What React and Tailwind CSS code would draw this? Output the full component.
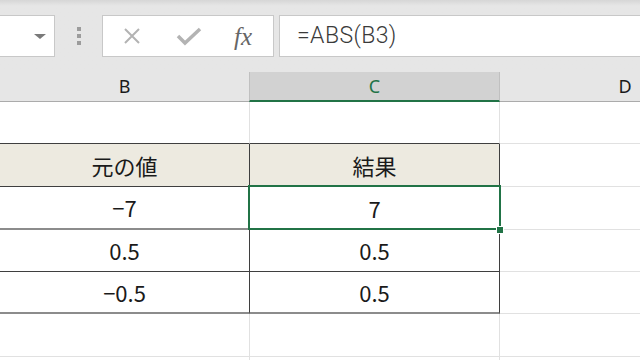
const light = 'border-[#e1e1e1]';
const dark = 'border-[#3f3f3f]';

function Cell({ className = '', children }) {
  return (
    <div className={`shrink-0 flex items-center justify-center border-r border-b ${className}`}>
      {children}
    </div>
  );
}

export default function App() {
  return (
    <div
      className="relative w-[640px] h-[360px] overflow-hidden bg-white text-[#1a1a1a]"
      style={{ fontFamily: '"Noto Sans", "Noto Sans CJK JP", sans-serif' }}
    >
      {/* toolbar */}
      <div className="h-[72px] bg-gradient-to-b from-[#d6d6d6] via-[#e6e6e6] via-[8%] to-[#e6e6e6] pt-[15px] flex items-start">
        <div className="w-[55px] h-[42px] bg-white border border-l-0 border-[#c8c8c8] flex items-center justify-end pr-[8px]">
          <div className="w-0 h-0 border-l-[6px] border-r-[6px] border-t-[5px] border-l-transparent border-r-transparent border-t-[#7a7a7a]" />
        </div>
        <div className="w-[47px] h-[42px] flex flex-col items-center justify-center gap-[3px]">
          <div className="w-[4px] h-[4px] bg-[#9c9c9c]" />
          <div className="w-[4px] h-[4px] bg-[#9c9c9c]" />
          <div className="w-[4px] h-[4px] bg-[#9c9c9c]" />
        </div>
        <div className="w-[172px] h-[42px] bg-white border border-[#c8c8c8] flex items-center">
          <svg width="20" height="20" viewBox="0 0 20 20" className="ml-[19px]">
            <path d="M3 3 L17 17 M17 3 L3 17" stroke="#b3b3b3" strokeWidth="2" fill="none" />
          </svg>
          <svg width="26" height="20" viewBox="0 0 26 20" className="ml-[34px]">
            <path d="M2 10 L9 17 L24 3" stroke="#b3b3b3" strokeWidth="3.5" fill="none" />
          </svg>
          <span
            className="ml-[32px] text-[25px] italic text-[#666] leading-none"
            style={{ fontFamily: '"Liberation Serif", "DejaVu Serif", serif' }}
          >
            fx
          </span>
        </div>
        <div className="ml-[5px] flex-1 h-[42px] bg-white border border-r-0 border-[#c8c8c8] flex items-center pl-[17px]">
          <span
            className="text-[23px] font-light text-[#3a3a3a] tracking-[0.4px]"
            style={{ fontFamily: 'Roboto, "Noto Sans", sans-serif' }}
          >
            =ABS(B3)
          </span>
        </div>
      </div>

      {/* column headers */}
      <div className="flex h-[30px] bg-[#e6e6e6] text-[18px]">
        <div className="w-[249px] shrink-0 flex items-center justify-center border-b border-[#ababab]">B</div>
        <div className="w-[251px] shrink-0 flex items-center justify-center bg-[#d2d2d2] border-x border-[#c0c0c0] border-b-[2px] border-b-[#217346] text-[#217346]">
          C
        </div>
        <div className="w-[250px] shrink-0 flex items-center justify-center border-b border-[#ababab]">D</div>
      </div>

      {/* rows */}
      <div className="text-[22px]" style={{ fontFamily: '"Noto Sans CJK JP", "Noto Sans", sans-serif' }}>
        <div className="flex h-[42px]">
          <Cell className={`w-[250px] ${light} border-b-[#3f3f3f]`} />
          <Cell className={`w-[250px] ${light} border-b-[#3f3f3f]`} />
          <Cell className={`w-[250px] ${light}`} />
        </div>
        <div className="flex h-[43px]">
          <Cell className={`w-[250px] bg-[#edeae0] ${dark}`}>元の値</Cell>
          <Cell className={`w-[250px] bg-[#edeae0] ${dark}`}>結果</Cell>
          <Cell className={`w-[250px] ${light}`} />
        </div>
        <div className="flex h-[43px]">
          <Cell className={`w-[250px] ${dark} border-b-2 border-b-[#8c8c8c]`}>−7</Cell>
          <Cell className={`w-[250px] ${dark}`}>7</Cell>
          <Cell className={`w-[250px] ${light}`} />
        </div>
        <div className="flex h-[42px]">
          <Cell className={`w-[250px] ${dark}`}>0.5</Cell>
          <Cell className={`w-[250px] ${dark}`}>0.5</Cell>
          <Cell className={`w-[250px] ${light}`} />
        </div>
        <div className="flex h-[42px]">
          <Cell className={`w-[250px] ${dark} border-b-2 border-b-[#8c8c8c]`}>−0.5</Cell>
          <Cell className={`w-[250px] ${dark} border-b-2 border-b-[#8c8c8c]`}>0.5</Cell>
          <Cell className={`w-[250px] ${light}`} />
        </div>
        <div className="flex h-[43px]">
          <Cell className={`w-[250px] ${light}`} />
          <Cell className={`w-[250px] ${light}`} />
          <Cell className={`w-[250px] ${light}`} />
        </div>
        <div className="flex h-[20px]">
          <Cell className={`w-[250px] ${light}`} />
          <Cell className={`w-[250px] ${light}`} />
          <Cell className={`w-[250px] ${light}`} />
        </div>
      </div>

      {/* selection */}
      <div className="absolute left-[248px] top-[185px] w-[253px] h-[45px] border-2 border-[#217346] pointer-events-none" />
      <div className="absolute left-[496px] top-[226px] w-[6px] h-[6px] bg-[#217346] border border-white box-content" />
    </div>
  );
}
